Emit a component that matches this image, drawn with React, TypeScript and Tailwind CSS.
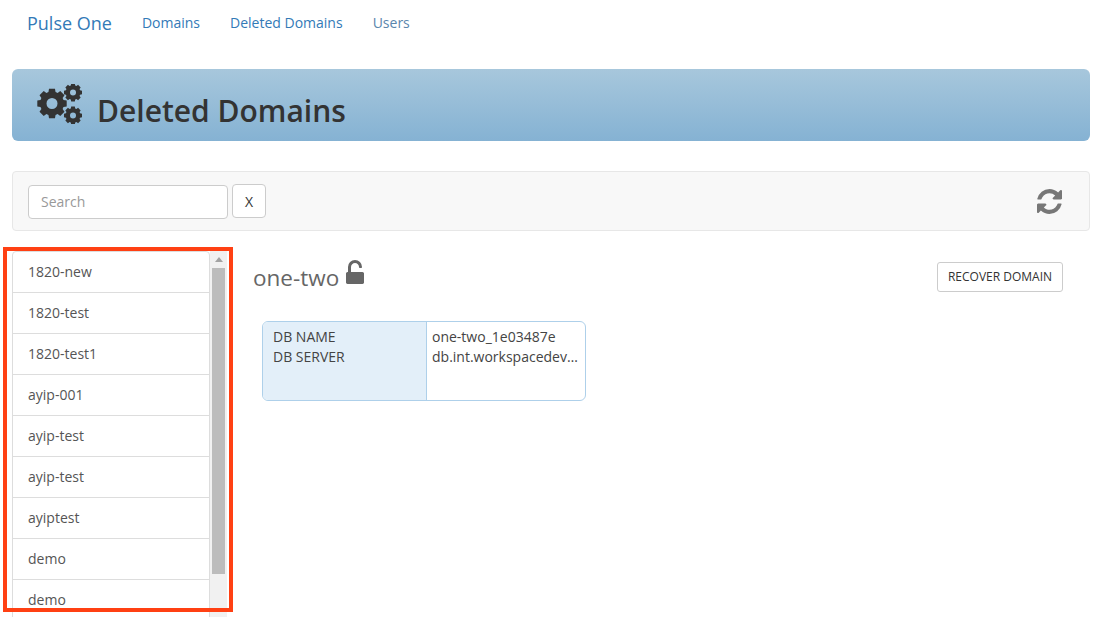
const domains = [
  "1820-new",
  "1820-test",
  "1820-test1",
  "ayip-001",
  "ayip-test",
  "ayip-test",
  "ayiptest",
  "demo",
  "demo",
];

// outline of one gear, hole included (needs fill-rule evenodd)
function gearPath(cx: number, cy: number, outer: number, inner: number, hole: number) {
  const teeth = 8;
  const points: string[] = [];
  for (let i = 0; i < teeth; i++) {
    const a = (Math.PI * 2 * i) / teeth - Math.PI / 2;
    const corners: Array<[number, number]> = [
      [a - 0.3, inner],
      [a - 0.2, outer],
      [a + 0.2, outer],
      [a + 0.3, inner],
    ];
    for (const [angle, r] of corners) {
      points.push(`${(cx + Math.cos(angle) * r).toFixed(2)} ${(cy + Math.sin(angle) * r).toFixed(2)}`);
    }
  }
  return `M${points.join("L")}Z M${cx - hole} ${cy}a${hole} ${hole} 0 1 0 ${hole * 2} 0a${hole} ${hole} 0 1 0 ${-hole * 2} 0Z`;
}

function CogsIcon() {
  return (
    <svg className="mb-[3px] h-[40px] w-[45px] text-[#333]" viewBox="0 0 45 40" fill="currentColor">
      <path fillRule="evenodd" d={gearPath(15, 19.5, 15, 12, 5.5)} />
      <path fillRule="evenodd" d={gearPath(36, 8.5, 9.2, 7.4, 3)} />
      <path fillRule="evenodd" d={gearPath(36, 31.5, 9.2, 7.4, 3)} />
    </svg>
  );
}

function RefreshIcon() {
  return (
    <svg className="ml-auto h-[25px] w-[25px] text-[#777]" viewBox="128 128 1536 1536" fill="currentColor">
      <path d="M1639 1056q0 5-1 7-64 268-268 434.5t-478 166.5q-146 0-282.5-55t-243.5-157l-129 129q-19 19-45 19t-45-19-19-45v-448q0-26 19-45t45-19h448q26 0 45 19t19 45-19 45l-137 137q71 66 161 102t187 36q134 0 250-65t186-179q11-17 53-117 8-23 30-23h192q13 0 22.5 9.5t9.5 22.5zm25-800v448q0 26-19 45t-45 19h-448q-26 0-45-19t-19-45 19-45l138-138q-148-137-349-137-134 0-250 65t-186 179q-11 17-53 117-8 23-30 23h-199q-13 0-22.5-9.5t-9.5-22.5v-7q65-268 270-434.5t480-166.5q146 0 284 55.5t245 156.5l130-129q19-19 45-19t45 19 19 45z" />
    </svg>
  );
}

function UnlockIcon() {
  return (
    <svg className="ml-[7px] mt-[-2px] h-[24px] w-[18px] text-[#666]" viewBox="320 128 1152 1536" fill="currentColor">
      <path d="M1376 896q40 0 68 28t28 68v576q0 40-28 68t-68 28h-960q-40 0-68-28t-28-68v-576q0-40 28-68t68-28h32v-320q0-185 131.5-316.5t316.5-131.5 316.5 131.5 131.5 316.5q0 26-19 45t-45 19h-64q-26 0-45-19t-19-45q0-106-75-181t-181-75-181 75-75 181v320h736z" />
    </svg>
  );
}

function NavBar() {
  return (
    <nav className="flex h-[47px] items-center pl-[27px]">
      <a className="text-[18px] text-[#337ab7]">Pulse One</a>
      <div className="ml-[30px] flex gap-[30px] pb-[2px] text-[14px] text-[#337ab7]">
        <a>Domains</a>
        <a>Deleted Domains</a>
        <a className="text-[#5a86ad]">Users</a>
      </div>
    </nav>
  );
}

function DomainList() {
  return (
    <div className="relative flex h-[366px] w-[215px] shrink-0 overflow-hidden">
      <ul className="h-fit w-[198px] rounded-t-[4px] border border-[#ddd] bg-white">
        {domains.map((name, i) => (
          <li
            className="flex h-[41px] items-center border-b border-[#ddd] pb-[2px] pl-[15px] text-[14px] text-[#555] last:border-b-0"
            key={`${name}-${i}`}
          >
            {name}
          </li>
        ))}
      </ul>
      <div className="flex w-[17px] flex-col items-center bg-[#f1f1f1]">
        <div className="mt-[6px] h-0 w-0 border-x-[4px] border-b-[5px] border-x-transparent border-b-[#a3a3a3]" />
        <div className="mt-[6px] h-[306px] w-[13px] bg-[#bcbcbc]" />
      </div>
    </div>
  );
}

function DomainDetail() {
  return (
    <section className="min-w-0 flex-1 pl-[26px]">
      <div className="flex items-start justify-between pr-[27px]">
        <h2 className="mt-[11px] flex items-start text-[22.5px] leading-[32px] text-[#666]">
          one-two
          <UnlockIcon />
        </h2>
        <button className="mt-[11px] h-[30px] w-[126px] rounded-[3px] border border-[#ccc] bg-white text-[12px] text-[#333]">
          RECOVER DOMAIN
        </button>
      </div>
      <div className="ml-[9px] mt-[27px] flex h-[80px] w-[324px] overflow-hidden rounded-[6px] border border-[#aed0ea] text-[14px] leading-[20px] text-[#444]">
        <div className="w-[164px] border-r border-[#aed0ea] bg-[#e3eff9] pl-[10px] pt-[5px]">
          <p>DB NAME</p>
          <p>DB SERVER</p>
        </div>
        <div className="min-w-0 flex-1 pl-[5px] pt-[5px]">
          <p>one-two_1e03487e</p>
          <p>db.int.workspacedev…</p>
        </div>
      </div>
    </section>
  );
}

export default function App() {
  return (
    <div className="relative h-[617px] overflow-hidden bg-white font-['Open_Sans',sans-serif]">
      <NavBar />
      <main className="px-[12px] pt-[22px] pr-[13px]">
        <header className="flex h-[72px] items-center rounded-[6px] bg-gradient-to-b from-[#a7c7dc] to-[#85b2d3] pl-[25px]">
          <CogsIcon />
          <h1 className="ml-[15px] mt-[11px] text-[30px] leading-[40px] font-semibold text-[#333]">
            Deleted Domains
          </h1>
        </header>
        <div className="mt-[30px] flex h-[60px] items-center rounded-[4px] border border-[#e7e7e7] bg-[#f8f8f8] pl-[15px] pr-[27px]">
          <input
            className="mt-[2px] h-[34px] w-[200px] rounded-[4px] border border-[#ccc] bg-white px-[12px] pb-[2px] text-[14px] placeholder:text-[#999]"
            placeholder="Search"
          />
          <button className="ml-[4px] h-[34px] w-[34px] rounded-[4px] border border-[#ccc] bg-white text-[14px] text-[#333]">
            X
          </button>
          <RefreshIcon />
        </div>
        <div className="mt-[20px] flex">
          <DomainList />
          <DomainDetail />
        </div>
      </main>
      {/* red highlight drawn over the list */}
      <div className="absolute left-[3px] top-[247px] h-[365px] w-[230px] border-[4px] border-[#ff4013]" />
    </div>
  );
}
